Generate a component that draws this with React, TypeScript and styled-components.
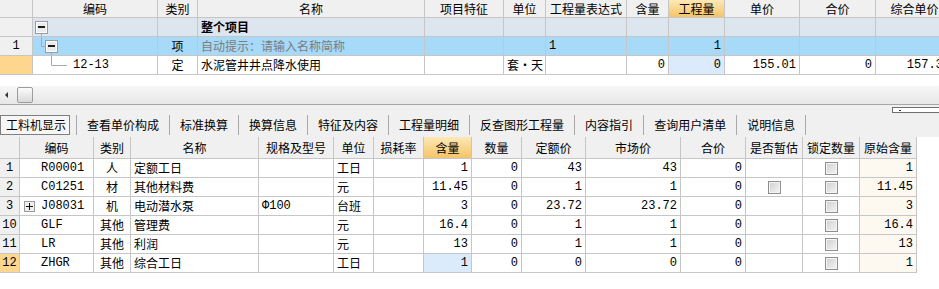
import React from "react";
import styled, { createGlobalStyle } from "styled-components";

const GlobalStyle = createGlobalStyle`
  html, body {
    margin: 0;
    padding: 0;
    background: #fff;
  }
  body {
    font-family: "Noto Sans CJK SC", "Liberation Sans", sans-serif;
    font-size: 12px;
    color: #000;
  }
`;

const LINE = "#c6c6c6";
const HEAD_BG = "#f0f0f0";
const HOT_HEAD = "linear-gradient(#fde8b6, #f5c468)";
const HOT_CELL = "#dcebfc";
const ROWNUM_HOT = "#ffd68e";

const TOP_COLS = "33px 125px 40px 227px 79px 42px 81px 42px 56px 75px 76px 78px";
const BOTTOM_COLS = "20px 74px 37px 128px 75px 40px 50px 48px 50px 64px 95px 65px 57px 57px 57px";

type Align = "left" | "center" | "right";

const Page = styled.div`
  width: 939px;
  height: 289px;
  overflow: hidden;
  display: flex;
  flex-direction: column;
  background: #fff;
`;

const TopPane = styled.div`
  display: flex;
  flex-direction: column;
  border-bottom: 1px solid #a6a6a6;
`;

const Viewport = styled.div`
  height: 86px;
  overflow: hidden;
  background: #fff;
`;

const Row = styled.div<{ $cols: string; $h: number; $bg?: string }>`
  display: grid;
  grid-template-columns: ${(p) => p.$cols};
  width: max-content;
  height: ${(p) => p.$h}px;
  background: ${(p) => p.$bg ?? "#fff"};
`;

const Cell = styled.div<{ $align?: Align; $bg?: string; $muted?: boolean; $bold?: boolean; $pl?: number }>`
  position: relative;
  box-sizing: border-box;
  border-right: 1px solid ${LINE};
  border-bottom: 1px solid ${LINE};
  display: flex;
  align-items: center;
  justify-content: ${(p) => (p.$align === "right" ? "flex-end" : p.$align === "center" ? "center" : "flex-start")};
  padding: 0 3px 0 ${(p) => p.$pl ?? 3}px;
  white-space: nowrap;
  overflow: hidden;
  line-height: 16px;
  background: ${(p) => p.$bg ?? "transparent"};
  color: ${(p) => (p.$muted ? "#7c7c7c" : "#000")};
  font-weight: ${(p) => (p.$bold ? 700 : 400)};
`;

const HeadCell = styled(Cell)<{ $hot?: boolean }>`
  justify-content: center;
  background: ${(p) => (p.$hot ? HOT_HEAD : HEAD_BG)};
`;

const RowNum = styled(Cell)<{ $hot?: boolean }>`
  justify-content: center;
  padding: 0;
  background: ${(p) => (p.$hot ? ROWNUM_HOT : HEAD_BG)};
`;

const Mono = styled.span`
  font-family: "Liberation Mono", "DejaVu Sans Mono", monospace;
  font-size: 12px;
`;

const Guide = styled.svg`
  position: absolute;
  left: 0;
  top: 0;
  overflow: visible;
  pointer-events: none;
`;

const HScroll = styled.div`
  height: 18px;
  display: flex;
  align-items: center;
  gap: 9px;
  padding-left: 5px;
  background: linear-gradient(#f7f7f7, #e7e7e7);
`;

const ArrowLeft = styled.span`
  width: 0;
  height: 0;
  border-top: 3px solid transparent;
  border-bottom: 3px solid transparent;
  border-right: 3px solid #333;
`;

const Thumb = styled.span`
  width: 16px;
  height: 16px;
  box-sizing: border-box;
  border: 1px solid #9c9c9c;
  border-radius: 2px;
  background: linear-gradient(#fbfbfb, #d9d9d9);
`;

const TabBar = styled.div`
  height: 32px;
  box-sizing: border-box;
  padding-bottom: 2px;
  display: flex;
  align-items: flex-end;
  background: #f0f0f0;
`;

const Tab = styled.div<{ $first?: boolean }>`
  height: 20px;
  display: flex;
  align-items: center;
  padding: ${(p) => (p.$first ? "0 6px 0 0" : "0 10px")};
  border-left: ${(p) => (p.$first ? "none" : "1px solid #a9a9a9")};
  white-space: nowrap;
  line-height: 16px;
`;

const FocusBox = styled.span`
  height: 20px;
  box-sizing: border-box;
  display: flex;
  align-items: center;
  padding: 0 3px 0 5px;
  border: 1px solid #7f7f7f;
  background: #f6f6f6;
`;

const MiniBar = styled.span`
  align-self: flex-start;
  margin: 2px 0 0 auto;
  width: 47px;
  height: 6px;
  box-sizing: border-box;
  border: 1px solid #6e6e6e;
  border-right: none;
  background: #fff linear-gradient(#333, #333) no-repeat 6px 2px / 2px 1px;
`;

const CodeSlot = styled.span`
  width: 17px;
  height: 11px;
  display: flex;
  align-items: center;
`;

const Check = styled.span`
  width: 13px;
  height: 13px;
  box-sizing: border-box;
  border: 1px solid #8e8e8e;
  box-shadow: inset 0 0 0 1px #f4f4f4;
  background: linear-gradient(135deg, #cfcfcf, #f5f5f5);
`;

const ExpandBox = ({ x, y }: { x: number; y: number }) => (
  <g>
    <rect x={x + 0.5} y={y + 0.5} width={12} height={12} fill="#ececec" stroke="#9c9c9c" />
    <rect x={x + 1.5} y={y + 1.5} width={10} height={10} fill="none" stroke="#fdfdfd" />
    <rect x={x + 3} y={y + 5} width={7} height={2} fill="#1c1c1c" />
  </g>
);

const TreeGuide = ({ level }: { level: 0 | 1 | 2 }) => (
  <Guide width={40} height={19}>
    {level === 0 && (
      <>
        <line x1={8.5} y1={15} x2={8.5} y2={20} stroke="#a9a9a9" />
        <ExpandBox x={2} y={3} />
      </>
    )}
    {level === 1 && (
      <>
        <line x1={8.5} y1={-1} x2={8.5} y2={9.5} stroke="#a9a9a9" />
        <line x1={8.5} y1={9.5} x2={12} y2={9.5} stroke="#a9a9a9" />
        <line x1={18.5} y1={15} x2={18.5} y2={20} stroke="#a9a9a9" />
        <ExpandBox x={12} y={3} />
      </>
    )}
    {level === 2 && (
      <>
        <line x1={18.5} y1={-1} x2={18.5} y2={9.5} stroke="#a9a9a9" />
        <line x1={18.5} y1={9.5} x2={34} y2={9.5} stroke="#a9a9a9" />
      </>
    )}
  </Guide>
);

const PlusBox = () => (
  <svg width={11} height={11}>
    <rect x={0.5} y={0.5} width={10} height={10} fill="#efefef" stroke="#9a9a9a" />
    <rect x={2} y={5} width={7} height={1} fill="#111" />
    <rect x={5} y={2} width={1} height={7} fill="#111" />
  </svg>
);

const TOP_HEAD = ["", "编码", "类别", "名称", "项目特征", "单位", "工程量表达式", "含量", "工程量", "单价", "合价", "综合单价"];

const blanks = (n: number) => Array.from({ length: n }, (_, i) => <Cell key={`b${i}`} />);

const TopGrid = () => (
  <Viewport>
    <Row $cols={TOP_COLS} $h={18}>
      {TOP_HEAD.map((h, i) => (
        <HeadCell key={i} $hot={h === "工程量"}>
          {h}
        </HeadCell>
      ))}
    </Row>
    <Row $cols={TOP_COLS} $h={19} $bg="#dde5ef">
      <RowNum />
      <Cell>
        <TreeGuide level={0} />
      </Cell>
      <Cell />
      <Cell $bold>整个项目</Cell>
      {blanks(8)}
    </Row>
    <Row $cols={TOP_COLS} $h={19} $bg="#a7d9f8">
      <RowNum>
        <Mono>1</Mono>
      </RowNum>
      <Cell>
        <TreeGuide level={1} />
      </Cell>
      <Cell $align="center">项</Cell>
      <Cell $muted>自动提示：请输入名称简称</Cell>
      <Cell />
      <Cell />
      <Cell>
        <Mono>1</Mono>
      </Cell>
      <Cell />
      <Cell $align="right">
        <Mono>1</Mono>
      </Cell>
      {blanks(3)}
    </Row>
    <Row $cols={TOP_COLS} $h={19}>
      <RowNum $hot />
      <Cell $pl={40}>
        <TreeGuide level={2} />
        <Mono>12-13</Mono>
      </Cell>
      <Cell $align="center">定</Cell>
      <Cell>水泥管井井点降水使用</Cell>
      <Cell />
      <Cell>套·天</Cell>
      <Cell />
      <Cell $align="right">
        <Mono>0</Mono>
      </Cell>
      <Cell $align="right" $bg={HOT_CELL}>
        <Mono>0</Mono>
      </Cell>
      <Cell $align="right">
        <Mono>155.01</Mono>
      </Cell>
      <Cell $align="right">
        <Mono>0</Mono>
      </Cell>
      <Cell $align="right">
        <Mono>157.36</Mono>
      </Cell>
    </Row>
  </Viewport>
);

const TABS = ["查看单价构成", "标准换算", "换算信息", "特征及内容", "工程量明细", "反查图形工程量", "内容指引", "查询用户清单", "说明信息"];

const Tabs = () => (
  <TabBar>
    <Tab $first>
      <FocusBox>工料机显示</FocusBox>
    </Tab>
    {TABS.map((t) => (
      <Tab key={t}>{t}</Tab>
    ))}
    <Tab />
    <MiniBar />
  </TabBar>
);

type Item = {
  no: string;
  code: string;
  expand?: boolean;
  kind: string;
  name: string;
  spec?: string;
  unit: string;
  qty: string;
  amount: string;
  quota: string;
  market: string;
  total: string;
  estimate?: boolean;
  origin: string;
  current?: boolean;
};

const ITEMS: Item[] = [
  { no: "1", code: "R00001", kind: "人", name: "定额工日", unit: "工日", qty: "1", amount: "0", quota: "43", market: "43", total: "0", origin: "1" },
  { no: "2", code: "C01251", kind: "材", name: "其他材料费", unit: "元", qty: "11.45", amount: "0", quota: "1", market: "1", total: "0", estimate: true, origin: "11.45" },
  { no: "3", code: "J08031", expand: true, kind: "机", name: "电动潜水泵", spec: "Φ100", unit: "台班", qty: "3", amount: "0", quota: "23.72", market: "23.72", total: "0", origin: "3" },
  { no: "10", code: "GLF", kind: "其他", name: "管理费", unit: "元", qty: "16.4", amount: "0", quota: "1", market: "1", total: "0", origin: "16.4" },
  { no: "11", code: "LR", kind: "其他", name: "利润", unit: "元", qty: "13", amount: "0", quota: "1", market: "1", total: "0", origin: "13" },
  { no: "12", code: "ZHGR", kind: "其他", name: "综合工日", unit: "工日", qty: "1", amount: "0", quota: "0", market: "0", total: "0", origin: "1", current: true },
];

const BOTTOM_HEAD = ["", "编码", "类别", "名称", "规格及型号", "单位", "损耗率", "含量", "数量", "定额价", "市场价", "合价", "是否暂估", "锁定数量", "原始含量"];

const ORIGIN_BG = "#fdf8f0";

const BottomGrid = () => (
  <div>
    <Row $cols={BOTTOM_COLS} $h={22}>
      {BOTTOM_HEAD.map((h, i) => (
        <HeadCell key={i} $hot={h === "含量"}>
          {h}
        </HeadCell>
      ))}
    </Row>
    {ITEMS.map((it) => (
      <Row key={it.no} $cols={BOTTOM_COLS} $h={19}>
        <RowNum $hot={it.current}>
          <Mono>{it.no}</Mono>
        </RowNum>
        <Cell $pl={4}>
          <CodeSlot>{it.expand && <PlusBox />}</CodeSlot>
          <Mono>{it.code}</Mono>
        </Cell>
        <Cell $align="center">{it.kind}</Cell>
        <Cell>{it.name}</Cell>
        <Cell>{it.spec && <Mono>{it.spec}</Mono>}</Cell>
        <Cell>{it.unit}</Cell>
        <Cell />
        <Cell $align="right" $bg={it.current ? HOT_CELL : undefined}>
          <Mono>{it.qty}</Mono>
        </Cell>
        <Cell $align="right">
          <Mono>{it.amount}</Mono>
        </Cell>
        <Cell $align="right">
          <Mono>{it.quota}</Mono>
        </Cell>
        <Cell $align="right">
          <Mono>{it.market}</Mono>
        </Cell>
        <Cell $align="right">
          <Mono>{it.total}</Mono>
        </Cell>
        <Cell $align="center">{it.estimate && <Check />}</Cell>
        <Cell $align="center">
          <Check />
        </Cell>
        <Cell $align="right" $bg={ORIGIN_BG}>
          <Mono>{it.origin}</Mono>
        </Cell>
      </Row>
    ))}
  </div>
);

const App = () => (
  <Page>
    <GlobalStyle />
    <TopPane>
      <TopGrid />
      <HScroll>
        <ArrowLeft />
        <Thumb />
      </HScroll>
    </TopPane>
    <Tabs />
    <BottomGrid />
  </Page>
);

export default App;
